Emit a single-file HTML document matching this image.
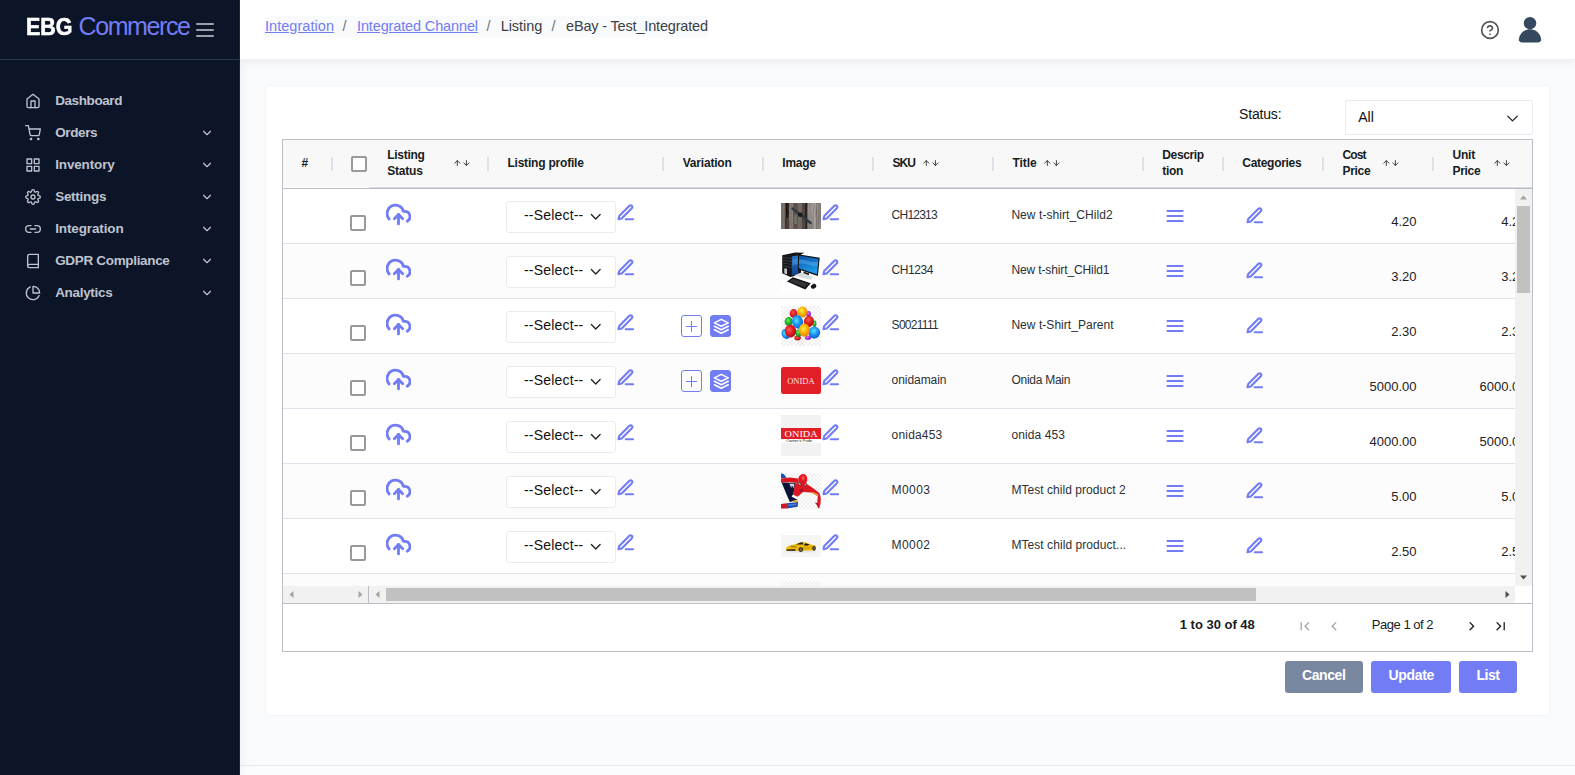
<!DOCTYPE html>
<html lang="en"><head><meta charset="utf-8"><title>EBG Commerce - Listing</title>
<style>
*{box-sizing:border-box;margin:0;padding:0}
html,body{width:1575px;height:775px;overflow:hidden}
body{background:#f9fafb;font-family:"Liberation Sans",sans-serif;color:#000;position:relative;font-size:14px}
.abs{position:absolute}
.t{position:absolute;white-space:pre;line-height:20px;height:20px}
#sidebar{z-index:3;position:absolute;left:0;top:0;width:240px;height:775px;background:#0c1427;border-right:1px solid #1a2540;color:#bfc3ce;box-shadow:0 8px 10px 0 rgba(183,192,206,.2)}
#sb-head{position:absolute;left:0;top:0;width:239px;height:60px;border-bottom:1px solid #2c3850}
#navbar{z-index:4;position:absolute;left:240px;top:0;width:1335px;height:60px;background:#fff;border-bottom:1px solid #eef0f5;box-shadow:0 2px 7px rgba(183,192,206,.22);clip-path:inset(0 0 -20px 0)}
#bcbg{position:absolute;left:25px;top:16px;width:443px;height:21px;background:#f9fafb}
#card{position:absolute;left:265px;top:85px;width:1285px;height:631px;background:#fff;border:1px solid #f2f4f9;border-radius:4px}
#footer{position:absolute;left:240px;top:765px;width:1335px;height:10px;background:#fbfcfd;border-top:1px solid #e8ebf1}
#grid{position:absolute;left:282px;top:139px;width:1251px;height:513px;border:1px solid #babfc7;background:#fff;overflow:hidden}
#ghead{position:absolute;left:0;top:0;width:1249px;height:49px;background:#f8f8f8;border-bottom:1px solid #babfc7}
.sep{position:absolute;top:17px;width:2px;height:14px;background:#dde2eb}
.row{position:absolute;left:0;width:1232px;height:55px;border-bottom:1px solid #dde2eb;background:#fff}
.row.odd{background:#fcfcfc}
.cb{position:absolute;width:16px;height:16px;border:2px solid #999;border-radius:2px;background:#fff}
.sel{position:absolute;left:223px;top:12px;width:110px;height:32px;border:1px solid #e8ebf1;border-radius:3px;background:#fff}
.btn{position:absolute;top:661px;height:32px;border-radius:3px;background:#727cf5}
.vb{position:absolute;width:21px;height:22px;border-radius:3px;border:1px solid #727cf5}
</style></head>
<body>
<svg width="0" height="0" style="position:absolute"><defs><pattern id="chk" width="4" height="4" patternUnits="userSpaceOnUse"><rect width="2" height="2" fill="#f0f0f0"/><rect x="2" y="2" width="2" height="2" fill="#f0f0f0"/></pattern><pattern id="chk2" width="2" height="2" patternUnits="userSpaceOnUse"><rect width="1" height="1" fill="#eeeeee"/><rect x="1" y="1" width="1" height="1" fill="#eeeeee"/></pattern><filter id="wd" x="0" y="0" width="1" height="1"><feTurbulence type="fractalNoise" baseFrequency="0.9 0.06" numOctaves="3" seed="4"/><feColorMatrix type="matrix" values="0 0 0 0 0.14  0 0 0 0 0.11  0 0 0 0 0.1  1.9 0 0 0 -0.6"/></filter><linearGradient id="pcs" x1="0" y1="0" x2=".3" y2="1"><stop offset="0" stop-color="#0a4fa6"/><stop offset="1" stop-color="#1f9be8"/></linearGradient><linearGradient id="pcb" x1="0" y1="0" x2="0" y2="1"><stop offset="0" stop-color="#2379c9"/><stop offset="1" stop-color="#143f88"/></linearGradient><radialGradient id="gR" cx=".42" cy=".38" r=".65"><stop offset="0" stop-color="#ff5a4e"/><stop offset=".55" stop-color="#dc1b20"/><stop offset="1" stop-color="#a20f14"/></radialGradient><radialGradient id="gY" cx=".42" cy=".38" r=".65"><stop offset="0" stop-color="#fff23a"/><stop offset=".55" stop-color="#f9ab0c"/><stop offset="1" stop-color="#e27c06"/></radialGradient><radialGradient id="gB" cx=".42" cy=".38" r=".65"><stop offset="0" stop-color="#4fe9ff"/><stop offset=".55" stop-color="#1b8af0"/><stop offset="1" stop-color="#0d5fd0"/></radialGradient><radialGradient id="gG" cx=".42" cy=".38" r=".65"><stop offset="0" stop-color="#6cf05a"/><stop offset=".55" stop-color="#1faf2c"/><stop offset="1" stop-color="#0e7e1b"/></radialGradient><radialGradient id="gP" cx=".42" cy=".38" r=".65"><stop offset="0" stop-color="#e77bff"/><stop offset=".55" stop-color="#a427dc"/><stop offset="1" stop-color="#7616b0"/></radialGradient></defs></svg>
<div id="sidebar">
<div id="sb-head"></div>
<span class="t" style="left:26.10px;top:17.28px;font-size:24px;font-weight:700;color:#fff;transform-origin:0 50%;transform:scaleX(0.895);-webkit-text-stroke:.6px #fff;">EBG</span>
<span class="t" style="left:78.50px;top:16.04px;font-size:25px;color:#727cf5;letter-spacing:-1.407px;">Commerce</span>
<svg class="abs" style="left:193px;top:18px;" width="24" height="24" viewBox="0 0 24 24" fill="none" stroke="#9b9fa9" stroke-width="2" stroke-linecap="round" stroke-linejoin="round"><line x1="4" y1="12" x2="20" y2="12"/><line x1="4" y1="6" x2="20" y2="6"/><line x1="4" y1="18" x2="20" y2="18"/></svg>
<svg class="abs" style="left:25px;top:92.7px;" width="16" height="16" viewBox="0 0 24 24" fill="none" stroke="#bfc3ce" stroke-width="2" stroke-linecap="round" stroke-linejoin="round"><path d="M3 9l9-7 9 7v11a2 2 0 0 1-2 2H5a2 2 0 0 1-2-2z"/><polyline points="9 22 9 12 15 12 15 22"/></svg>
<span class="t" style="left:55.20px;top:91.02px;font-size:13.5px;font-weight:700;color:#bfc3ce;letter-spacing:-0.414px;">Dashboard</span>
<svg class="abs" style="left:25px;top:124.7px;" width="16" height="16" viewBox="0 0 24 24" fill="none" stroke="#bfc3ce" stroke-width="2" stroke-linecap="round" stroke-linejoin="round"><circle cx="9" cy="21" r="1"/><circle cx="20" cy="21" r="1"/><path d="M1 1h4l2.68 13.39a2 2 0 0 0 2 1.61h9.72a2 2 0 0 0 2-1.61L23 6H6"/></svg>
<span class="t" style="left:55.20px;top:123.02px;font-size:13.5px;font-weight:700;color:#bfc3ce;letter-spacing:-0.378px;">Orders</span>
<svg class="abs" style="left:200px;top:125.5px;" width="14" height="14" viewBox="0 0 24 24" fill="none" stroke="#bfc3ce" stroke-width="2" stroke-linecap="round" stroke-linejoin="round"><polyline points="6 9 12 15 18 9"/></svg>
<svg class="abs" style="left:25px;top:156.7px;" width="16" height="16" viewBox="0 0 24 24" fill="none" stroke="#bfc3ce" stroke-width="2" stroke-linecap="round" stroke-linejoin="round"><rect x="3" y="3" width="7" height="7"/><rect x="14" y="3" width="7" height="7"/><rect x="14" y="14" width="7" height="7"/><rect x="3" y="14" width="7" height="7"/></svg>
<span class="t" style="left:55.20px;top:155.02px;font-size:13.5px;font-weight:700;color:#bfc3ce;letter-spacing:-0.149px;">Inventory</span>
<svg class="abs" style="left:200px;top:157.5px;" width="14" height="14" viewBox="0 0 24 24" fill="none" stroke="#bfc3ce" stroke-width="2" stroke-linecap="round" stroke-linejoin="round"><polyline points="6 9 12 15 18 9"/></svg>
<svg class="abs" style="left:25px;top:188.7px;" width="16" height="16" viewBox="0 0 24 24" fill="none" stroke="#bfc3ce" stroke-width="2" stroke-linecap="round" stroke-linejoin="round"><circle cx="12" cy="12" r="3"/><path d="M19.4 15a1.65 1.65 0 0 0 .33 1.82l.06.06a2 2 0 0 1 0 2.83 2 2 0 0 1-2.83 0l-.06-.06a1.65 1.65 0 0 0-1.82-.33 1.65 1.65 0 0 0-1 1.51V21a2 2 0 0 1-2 2 2 2 0 0 1-2-2v-.09A1.65 1.65 0 0 0 9 19.4a1.65 1.65 0 0 0-1.82.33l-.06.06a2 2 0 0 1-2.83 0 2 2 0 0 1 0-2.83l.06-.06a1.65 1.65 0 0 0 .33-1.82 1.65 1.65 0 0 0-1.51-1H3a2 2 0 0 1-2-2 2 2 0 0 1 2-2h.09A1.65 1.65 0 0 0 4.6 9a1.65 1.65 0 0 0-.33-1.82l-.06-.06a2 2 0 0 1 0-2.83 2 2 0 0 1 2.83 0l.06.06a1.65 1.65 0 0 0 1.82.33H9a1.65 1.65 0 0 0 1-1.51V3a2 2 0 0 1 2-2 2 2 0 0 1 2 2v.09a1.65 1.65 0 0 0 1 1.51 1.65 1.65 0 0 0 1.82-.33l.06-.06a2 2 0 0 1 2.83 0 2 2 0 0 1 0 2.83l-.06.06a1.65 1.65 0 0 0-.33 1.82V9a1.65 1.65 0 0 0 1.51 1H21a2 2 0 0 1 2 2 2 2 0 0 1-2 2h-.09a1.65 1.65 0 0 0-1.51 1z"/></svg>
<span class="t" style="left:55.20px;top:187.02px;font-size:13.5px;font-weight:700;color:#bfc3ce;letter-spacing:-0.289px;">Settings</span>
<svg class="abs" style="left:200px;top:189.5px;" width="14" height="14" viewBox="0 0 24 24" fill="none" stroke="#bfc3ce" stroke-width="2" stroke-linecap="round" stroke-linejoin="round"><polyline points="6 9 12 15 18 9"/></svg>
<svg class="abs" style="left:25px;top:220.7px;" width="16" height="16" viewBox="0 0 24 24" fill="none" stroke="#bfc3ce" stroke-width="2" stroke-linecap="round" stroke-linejoin="round"><path d="M15 7h3a5 5 0 0 1 5 5 5 5 0 0 1-5 5h-3m-6 0H6a5 5 0 0 1-5-5 5 5 0 0 1 5-5h3"/><line x1="8" y1="12" x2="16" y2="12"/></svg>
<span class="t" style="left:55.20px;top:219.02px;font-size:13.5px;font-weight:700;color:#bfc3ce;letter-spacing:-0.119px;">Integration</span>
<svg class="abs" style="left:200px;top:221.5px;" width="14" height="14" viewBox="0 0 24 24" fill="none" stroke="#bfc3ce" stroke-width="2" stroke-linecap="round" stroke-linejoin="round"><polyline points="6 9 12 15 18 9"/></svg>
<svg class="abs" style="left:25px;top:252.7px;" width="16" height="16" viewBox="0 0 24 24" fill="none" stroke="#bfc3ce" stroke-width="2" stroke-linecap="round" stroke-linejoin="round"><path d="M4 19.5A2.5 2.5 0 0 1 6.5 17H20"/><path d="M6.5 2H20v20H6.5A2.5 2.5 0 0 1 4 19.5v-15A2.5 2.5 0 0 1 6.5 2z"/></svg>
<span class="t" style="left:55.20px;top:251.02px;font-size:13.5px;font-weight:700;color:#bfc3ce;letter-spacing:-0.330px;">GDPR Compliance</span>
<svg class="abs" style="left:200px;top:253.5px;" width="14" height="14" viewBox="0 0 24 24" fill="none" stroke="#bfc3ce" stroke-width="2" stroke-linecap="round" stroke-linejoin="round"><polyline points="6 9 12 15 18 9"/></svg>
<svg class="abs" style="left:25px;top:284.7px;" width="16" height="16" viewBox="0 0 24 24" fill="none" stroke="#bfc3ce" stroke-width="2" stroke-linecap="round" stroke-linejoin="round"><path d="M21.21 15.89A10 10 0 1 1 8 2.83"/><path d="M22 12A10 10 0 0 0 12 2v10z"/></svg>
<span class="t" style="left:55.20px;top:283.02px;font-size:13.5px;font-weight:700;color:#bfc3ce;letter-spacing:-0.321px;">Analytics</span>
<svg class="abs" style="left:200px;top:285.5px;" width="14" height="14" viewBox="0 0 24 24" fill="none" stroke="#bfc3ce" stroke-width="2" stroke-linecap="round" stroke-linejoin="round"><polyline points="6 9 12 15 18 9"/></svg></div>
<div id="navbar">
<div id="bcbg"></div></div>
<div class="abs" style="left:0;top:0;width:0;height:0;z-index:5">
<a class="t" style="left:265.00px;top:15.88px;font-size:14.5px;color:#727cf5;letter-spacing:0.045px;text-decoration:underline;">Integration</a>
<span class="t" style="left:342.50px;top:15.88px;font-size:14.5px;color:#6c757d;">/</span>
<a class="t" style="left:357.00px;top:15.88px;font-size:14.5px;color:#727cf5;letter-spacing:-0.134px;text-decoration:underline;">Integrated Channel</a>
<span class="t" style="left:486.50px;top:15.88px;font-size:14.5px;color:#6c757d;">/</span>
<span class="t" style="left:500.70px;top:15.88px;font-size:14.5px;color:#3a3f45;letter-spacing:-0.065px;">Listing</span>
<span class="t" style="left:551.50px;top:15.88px;font-size:14.5px;color:#6c757d;">/</span>
<span class="t" style="left:566.00px;top:15.88px;font-size:14.5px;color:#3a3f45;letter-spacing:-0.169px;">eBay - Test_Integrated</span>
<svg class="abs" style="left:1479.8px;top:19.6px;" width="20" height="20" viewBox="0 0 24 24" fill="none" stroke="#555" stroke-width="2" stroke-linecap="round" stroke-linejoin="round"><circle cx="12" cy="12" r="10"/><path d="M9.09 9a3 3 0 0 1 5.83 1c0 2-3 3-3 3"/><line x1="12" y1="17" x2="12.01" y2="17"/></svg>
<svg class="abs" style="left:1517px;top:15px" width="26" height="29" viewBox="0 0 26 29"><circle cx="13" cy="8.2" r="6.2" fill="#34495e"/><path d="M1.8 25.5C1.8 19 7 14.2 13 14.2S24.2 19 24.2 25.5Q23 27.6 21 27.6H5Q3 27.6 1.8 25.5Z" fill="#34495e"/></svg></div>
<div id="card"></div>
<span class="t" style="left:1239.00px;top:104.25px;font-size:14px;color:#111;letter-spacing:-0.168px;">Status:</span>
<div class="abs" style="left:1345px;top:100px;width:188px;height:35px;border:1px solid #e8ebf1;border-radius:2px;background:#fff"></div>
<span class="t" style="left:1358.20px;top:106.85px;font-size:14px;color:#111;letter-spacing:0.095px;">All</span>
<svg class="abs" style="left:1502.5px;top:108.5px;" width="19" height="19" viewBox="0 0 24 24" fill="none" stroke="#222" stroke-width="1.7" stroke-linecap="round" stroke-linejoin="round"><polyline points="6 9 12 15 18 9"/></svg>
<div class="btn" style="left:1285px;width:78px;background:#7987a1"></div>
<span class="t" style="left:1302.00px;top:665.25px;font-size:14px;font-weight:700;color:#fff;letter-spacing:-0.422px;">Cancel</span>
<div class="btn" style="left:1371px;width:80px;background:#727cf5"></div>
<span class="t" style="left:1388.50px;top:665.25px;font-size:14px;font-weight:700;color:#fff;letter-spacing:-0.337px;">Update</span>
<div class="btn" style="left:1459px;width:58px;background:#727cf5"></div>
<span class="t" style="left:1476.50px;top:665.25px;font-size:14px;font-weight:700;color:#fff;letter-spacing:-0.454px;">List</span>
<div id="grid">
<div id="ghead"></div>
<div class="abs" style="left:86px;top:47px;width:1163px;height:1px;background:#d6d7da"></div>
<div class="abs" style="left:86px;top:46px;width:1163px;height:1px;background:#fcfcfc"></div>
<div class="abs" style="left:0;top:47px;width:86px;height:1px;background:#fdfdfd"></div>
<span class="t" style="left:18.50px;top:13.24px;font-size:12px;font-weight:700;color:#181d1f;">#</span>
<div class="cb" style="left:68px;top:16px"></div>
<div class="sep" style="left:48px"></div>
<div class="sep" style="left:204px"></div>
<div class="sep" style="left:379px"></div>
<div class="sep" style="left:479px"></div>
<div class="sep" style="left:589px"></div>
<div class="sep" style="left:709px"></div>
<div class="sep" style="left:859px"></div>
<div class="sep" style="left:939px"></div>
<div class="sep" style="left:1039px"></div>
<div class="sep" style="left:1149px"></div>
<span class="t" style="left:104.30px;top:5.34px;font-size:12px;font-weight:700;color:#181d1f;letter-spacing:-0.312px;">Listing</span>
<span class="t" style="left:104.30px;top:21.34px;font-size:12px;font-weight:700;color:#181d1f;letter-spacing:-0.216px;">Status</span>
<span class="t" style="left:224.40px;top:13.24px;font-size:12px;font-weight:700;color:#181d1f;letter-spacing:-0.203px;">Listing profile</span>
<span class="t" style="left:399.70px;top:13.24px;font-size:12px;font-weight:700;color:#181d1f;letter-spacing:-0.199px;">Variation</span>
<span class="t" style="left:499.30px;top:13.24px;font-size:12px;font-weight:700;color:#181d1f;letter-spacing:-0.242px;">Image</span>
<span class="t" style="left:609.50px;top:13.24px;font-size:12px;font-weight:700;color:#181d1f;letter-spacing:-0.978px;">SKU</span>
<span class="t" style="left:729.50px;top:13.24px;font-size:12px;font-weight:700;color:#181d1f;letter-spacing:-0.078px;">Title</span>
<span class="t" style="left:879.30px;top:5.34px;font-size:12px;font-weight:700;color:#181d1f;letter-spacing:-0.359px;">Descrip</span>
<span class="t" style="left:879.30px;top:21.34px;font-size:12px;font-weight:700;color:#181d1f;letter-spacing:-0.314px;">tion</span>
<span class="t" style="left:959.30px;top:13.24px;font-size:12px;font-weight:700;color:#181d1f;letter-spacing:-0.298px;">Categories</span>
<span class="t" style="left:1059.40px;top:5.34px;font-size:12px;font-weight:700;color:#181d1f;letter-spacing:-0.878px;">Cost</span>
<span class="t" style="left:1059.40px;top:21.34px;font-size:12px;font-weight:700;color:#181d1f;letter-spacing:-0.258px;">Price</span>
<span class="t" style="left:1169.40px;top:5.34px;font-size:12px;font-weight:700;color:#181d1f;letter-spacing:-0.151px;">Unit</span>
<span class="t" style="left:1169.40px;top:21.34px;font-size:12px;font-weight:700;color:#181d1f;letter-spacing:-0.258px;">Price</span>
<svg class="abs" style="left:170.10000000000002px;top:18px" width="18" height="10" viewBox="0 0 18 10" fill="none" stroke="#33383d" stroke-width="0.95" stroke-linecap="round" stroke-linejoin="round"><path d="M4.3 7.500V2.700M1.700 5.200L4.300 2.600 6.900 5.200"/><path d="M13.400 2.600V7.400M10.800 4.900L13.400 7.500 16 4.900"/></svg>
<svg class="abs" style="left:639.2px;top:18px" width="18" height="10" viewBox="0 0 18 10" fill="none" stroke="#33383d" stroke-width="0.95" stroke-linecap="round" stroke-linejoin="round"><path d="M4.3 7.500V2.700M1.700 5.200L4.300 2.600 6.900 5.200"/><path d="M13.400 2.600V7.400M10.800 4.900L13.400 7.500 16 4.900"/></svg>
<svg class="abs" style="left:760.3px;top:18px" width="18" height="10" viewBox="0 0 18 10" fill="none" stroke="#33383d" stroke-width="0.95" stroke-linecap="round" stroke-linejoin="round"><path d="M4.3 7.500V2.700M1.700 5.200L4.300 2.600 6.900 5.200"/><path d="M13.400 2.600V7.400M10.800 4.900L13.400 7.500 16 4.900"/></svg>
<svg class="abs" style="left:1099.3px;top:18px" width="18" height="10" viewBox="0 0 18 10" fill="none" stroke="#33383d" stroke-width="0.95" stroke-linecap="round" stroke-linejoin="round"><path d="M4.3 7.500V2.700M1.700 5.200L4.300 2.600 6.900 5.200"/><path d="M13.400 2.600V7.400M10.800 4.900L13.400 7.500 16 4.900"/></svg>
<svg class="abs" style="left:1209.5px;top:18px" width="18" height="10" viewBox="0 0 18 10" fill="none" stroke="#33383d" stroke-width="0.95" stroke-linecap="round" stroke-linejoin="round"><path d="M4.3 7.500V2.700M1.700 5.200L4.300 2.600 6.900 5.200"/><path d="M13.400 2.600V7.400M10.800 4.900L13.400 7.500 16 4.900"/></svg>
<div class="abs" style="left:0;top:49px;width:1232px;height:397px;overflow:hidden">
<div class="row" style="top:0px">
<div class="cb" style="left:67px;top:26px"></div>
<svg class="abs" style="left:102.6px;top:13.2px;" width="25" height="25" viewBox="0 0 24 24" fill="none" stroke="#727cf5" stroke-width="2.7" stroke-linecap="round" stroke-linejoin="round"><polyline points="16 16 12 12 8 16"/><line x1="12" y1="12" x2="12" y2="21"/><path d="M20.39 18.39A5 5 0 0 0 18 9h-1.26A8 8 0 1 0 3 16.3"/></svg>
<div class="sel"></div>
<span class="t" style="left:241.00px;top:16.15px;font-size:14px;color:#111;letter-spacing:0.183px;">--Select--</span>
<svg class="abs" style="left:303.5px;top:18.8px;" width="17.5" height="17.5" viewBox="0 0 24 24" fill="none" stroke="#222" stroke-width="1.8" stroke-linecap="round" stroke-linejoin="round"><polyline points="6 9 12 15 18 9"/></svg>
<svg class="abs" style="left:333.3px;top:13.6px;" width="19.5" height="19.5" viewBox="0 0 24 24" fill="none" stroke="#727cf5" stroke-width="2.6" stroke-linecap="round" stroke-linejoin="round"><path d="M12 20h9"/><path d="M16.5 3.5a2.121 2.121 0 0 1 3 3L7 19l-4 1 1-4L16.5 3.5z"/></svg>
<svg class="abs" style="left:498px;top:14px" width="40" height="26" viewBox="0 0 40 26"><rect width="40" height="26" fill="#6f665f"/>
<rect x="0" y="0" width="4.500" height="26" fill="#7d746d"/><rect x="4.500" y="0" width="3.600" height="26" fill="#120d0b"/>
<rect x="8.100" y="0" width="4" height="26" fill="#8a817a"/><rect x="12" y="0" width="5" height="26" fill="#5b504a"/><rect x="17" y="0" width="4" height="26" fill="#776b63"/><rect x="21" y="0" width="3.200" height="26" fill="#4a3f3a"/>
<rect x="24.200" y="0" width="2.300" height="26" fill="#191311"/><rect x="26.500" y="0" width="5" height="26" fill="#9a9593"/><rect x="31.500" y="0" width="4" height="26" fill="#b3b0af"/><rect x="35.500" y="0" width="4.500" height="26" fill="#8e8986"/>
<rect x="4.500" y="15" width="3.600" height="11" fill="#3a2f29"/><rect x="13" y="12" width="3" height="9" fill="#8c9a86" opacity=".45"/>
<rect width="40" height="26" filter="url(#wd)" opacity=".7"/>
<path d="M11.500 5.500L29.500 20" stroke="#2f3c40" stroke-width="2.500" stroke-linecap="round"/><circle cx="19.300" cy="11.800" r="2.300" fill="#14191b"/></svg>
<svg class="abs" style="left:537.8px;top:13.6px;" width="19.5" height="19.5" viewBox="0 0 24 24" fill="none" stroke="#727cf5" stroke-width="2.6" stroke-linecap="round" stroke-linejoin="round"><path d="M12 20h9"/><path d="M16.5 3.5a2.121 2.121 0 0 1 3 3L7 19l-4 1 1-4L16.5 3.5z"/></svg>
<span class="t" style="left:608.60px;top:15.74px;font-size:12px;color:#2b3035;letter-spacing:-0.770px;">CH12313</span>
<span class="t" style="left:728.40px;top:15.74px;font-size:12px;color:#2b3035;letter-spacing:0.067px;">New t-shirt_CHild2</span>
<svg class="abs" style="left:881.8px;top:16.5px;" width="20" height="20" viewBox="0 0 24 24" fill="none" stroke="#727cf5" stroke-width="2.6" stroke-linecap="round" stroke-linejoin="round"><line x1="3" y1="12" x2="21" y2="12"/><line x1="3" y1="6" x2="21" y2="6"/><line x1="3" y1="18" x2="21" y2="18"/></svg>
<svg class="abs" style="left:961.6px;top:16.6px;" width="19.5" height="19.5" viewBox="0 0 24 24" fill="none" stroke="#727cf5" stroke-width="2.6" stroke-linecap="round" stroke-linejoin="round"><path d="M12 20h9"/><path d="M16.5 3.5a2.121 2.121 0 0 1 3 3L7 19l-4 1 1-4L16.5 3.5z"/></svg>
<span class="t" style="left:1108.19px;top:22.60px;font-size:13px;color:#222;">4.20</span>
<span class="t" style="left:1218.19px;top:22.60px;font-size:13px;color:#222;">4.20</span></div>
<div class="row odd" style="top:55px">
<div class="cb" style="left:67px;top:26px"></div>
<svg class="abs" style="left:102.6px;top:13.2px;" width="25" height="25" viewBox="0 0 24 24" fill="none" stroke="#727cf5" stroke-width="2.7" stroke-linecap="round" stroke-linejoin="round"><polyline points="16 16 12 12 8 16"/><line x1="12" y1="12" x2="12" y2="21"/><path d="M20.39 18.39A5 5 0 0 0 18 9h-1.26A8 8 0 1 0 3 16.3"/></svg>
<div class="sel"></div>
<span class="t" style="left:241.00px;top:16.15px;font-size:14px;color:#111;letter-spacing:0.183px;">--Select--</span>
<svg class="abs" style="left:303.5px;top:18.8px;" width="17.5" height="17.5" viewBox="0 0 24 24" fill="none" stroke="#222" stroke-width="1.8" stroke-linecap="round" stroke-linejoin="round"><polyline points="6 9 12 15 18 9"/></svg>
<svg class="abs" style="left:333.3px;top:13.6px;" width="19.5" height="19.5" viewBox="0 0 24 24" fill="none" stroke="#727cf5" stroke-width="2.6" stroke-linecap="round" stroke-linejoin="round"><path d="M12 20h9"/><path d="M16.5 3.5a2.121 2.121 0 0 1 3 3L7 19l-4 1 1-4L16.5 3.5z"/></svg>
<svg class="abs" style="left:498px;top:7px" width="40" height="40" viewBox="0 0 40 40"><rect width="40" height="40" fill="#fff"/>
<path d="M1.200 4.200L14 1.400 23.500 1.800 20 3.600 20 23.400 9.200 26 1.200 22.200Z" fill="#151618"/>
<path d="M10.800 5.400L17.300 4.200 17.300 22.600 10.800 24.400Z" fill="url(#pcb)"/><path d="M11.500 9C13.500 7.500 15.500 8.500 17.300 7.200V13C15.500 14 13.500 13 11.500 14.500Z" fill="#6cc0f5" opacity=".35"/>
<path d="M2 6.600L10.600 7.400M2 9.400L10.600 10.400M2 12.200L10.600 13.400M2 15L10.600 16.400" stroke="#44474c" stroke-width=".8"/>
<path d="M3.300 17.300L6 17.800 6 23.300 3.300 22.400Z" fill="#c3c7cb"/>
<path d="M17 3.200L38.700 6.800 36.900 25.100 16.800 18.300Z" fill="#0e0f11"/><path d="M18 4.600L37.500 7.800 36 23.300 17.800 17.200Z" fill="url(#pcs)"/>
<path d="M18 9C24 7 30 13 37 10.500L36.600 15C30 16.500 25 11 17.900 13Z" fill="#5cb6f2" opacity=".45"/>
<path d="M22.500 20.400L28 22.200 27.800 26.600 22.300 25.200Z" fill="#1d1e21"/><path d="M13 24.200L20.500 21.500 31.500 25.500 30 28.800 21 27Z" fill="#d9dcdf"/>
<path d="M5.900 30.600L11.900 26.300 29.800 32.300 24.300 38.400Z" fill="#131416"/><path d="M8.300 30.400L12.100 27.700 27.200 32.700 23.900 36.300Z" fill="#303236"/>
<ellipse cx="32.600" cy="35.300" rx="2.800" ry="2.200" fill="#141517" transform="rotate(-30 32.600 35.300)"/><path d="M31 31.500Q33 32.500 32.800 33.500" stroke="#777" stroke-width=".4" fill="none"/></svg>
<svg class="abs" style="left:537.8px;top:13.6px;" width="19.5" height="19.5" viewBox="0 0 24 24" fill="none" stroke="#727cf5" stroke-width="2.6" stroke-linecap="round" stroke-linejoin="round"><path d="M12 20h9"/><path d="M16.5 3.5a2.121 2.121 0 0 1 3 3L7 19l-4 1 1-4L16.5 3.5z"/></svg>
<span class="t" style="left:608.60px;top:15.74px;font-size:12px;color:#2b3035;letter-spacing:-0.460px;">CH1234</span>
<span class="t" style="left:728.40px;top:15.74px;font-size:12px;color:#2b3035;letter-spacing:-0.116px;">New t-shirt_CHild1</span>
<svg class="abs" style="left:881.8px;top:16.5px;" width="20" height="20" viewBox="0 0 24 24" fill="none" stroke="#727cf5" stroke-width="2.6" stroke-linecap="round" stroke-linejoin="round"><line x1="3" y1="12" x2="21" y2="12"/><line x1="3" y1="6" x2="21" y2="6"/><line x1="3" y1="18" x2="21" y2="18"/></svg>
<svg class="abs" style="left:961.6px;top:16.6px;" width="19.5" height="19.5" viewBox="0 0 24 24" fill="none" stroke="#727cf5" stroke-width="2.6" stroke-linecap="round" stroke-linejoin="round"><path d="M12 20h9"/><path d="M16.5 3.5a2.121 2.121 0 0 1 3 3L7 19l-4 1 1-4L16.5 3.5z"/></svg>
<span class="t" style="left:1108.19px;top:22.60px;font-size:13px;color:#222;">3.20</span>
<span class="t" style="left:1218.19px;top:22.60px;font-size:13px;color:#222;">3.20</span></div>
<div class="row" style="top:110px">
<div class="cb" style="left:67px;top:26px"></div>
<svg class="abs" style="left:102.6px;top:13.2px;" width="25" height="25" viewBox="0 0 24 24" fill="none" stroke="#727cf5" stroke-width="2.7" stroke-linecap="round" stroke-linejoin="round"><polyline points="16 16 12 12 8 16"/><line x1="12" y1="12" x2="12" y2="21"/><path d="M20.39 18.39A5 5 0 0 0 18 9h-1.26A8 8 0 1 0 3 16.3"/></svg>
<div class="sel"></div>
<span class="t" style="left:241.00px;top:16.15px;font-size:14px;color:#111;letter-spacing:0.183px;">--Select--</span>
<svg class="abs" style="left:303.5px;top:18.8px;" width="17.5" height="17.5" viewBox="0 0 24 24" fill="none" stroke="#222" stroke-width="1.8" stroke-linecap="round" stroke-linejoin="round"><polyline points="6 9 12 15 18 9"/></svg>
<svg class="abs" style="left:333.3px;top:13.6px;" width="19.5" height="19.5" viewBox="0 0 24 24" fill="none" stroke="#727cf5" stroke-width="2.6" stroke-linecap="round" stroke-linejoin="round"><path d="M12 20h9"/><path d="M16.5 3.5a2.121 2.121 0 0 1 3 3L7 19l-4 1 1-4L16.5 3.5z"/></svg>
<div class="vb" style="left:398px;top:16px"></div>
<div class="abs" style="left:403px;top:26.5px;width:11px;height:1px;background:#727cf5"></div>
<div class="abs" style="left:408px;top:21.5px;width:1px;height:11px;background:#727cf5"></div>
<div class="vb" style="left:427px;top:16px;background:#727cf5"></div>
<svg class="abs" style="left:429.8px;top:18.7px;" width="16.6" height="16.6" viewBox="0 0 24 24" fill="none" stroke="#fff" stroke-width="2.2" stroke-linecap="round" stroke-linejoin="round"><polygon points="12 2 2 7 12 12 22 7 12 2"/><polyline points="2 17 12 22 22 17"/><polyline points="2 12 12 17 22 12"/></svg>
<svg class="abs" style="left:498px;top:7px" width="40" height="40" viewBox="0 0 40 40"><rect width="40" height="100" fill="#fdfdfd"/><rect width="40" height="100" fill="url(#chk)"/><path d="M19 32L17 39.500M24 32L21 39.500M21 33L19.500 39.500" stroke="#ecd9b4" stroke-width=".5"/><ellipse cx="27.6" cy="7.9" rx="2.3" ry="3" fill="url(#gP)"/><ellipse cx="33.6" cy="17.7" rx="1.8" ry="3.2" fill="url(#gG)"/><ellipse cx="4.9" cy="28" rx="4.2" ry="5.2" fill="url(#gB)" transform="rotate(-25 4.9 28)"/><ellipse cx="27" cy="31.7" rx="3" ry="2" fill="url(#gP)"/><ellipse cx="16.6" cy="32" rx="3.3" ry="2.4" fill="url(#gR)"/><ellipse cx="12.6" cy="7.5" rx="3.9" ry="4.4" fill="url(#gR)"/><ellipse cx="7.7" cy="15.6" rx="4.1" ry="4.5" fill="url(#gG)"/><ellipse cx="21.4" cy="5.9" rx="5" ry="5.5" fill="url(#gY)"/><ellipse cx="27.9" cy="15.4" rx="5" ry="5.7" fill="url(#gR)" transform="rotate(15 27.9 15.4)"/><ellipse cx="17.5" cy="27.2" rx="2.8" ry="3.8" fill="url(#gG)"/><ellipse cx="33.2" cy="26.6" rx="5.9" ry="6" fill="url(#gB)" transform="rotate(20 33.2 26.6)"/><ellipse cx="16.6" cy="15.9" rx="5.5" ry="6.9" fill="url(#gB)" transform="rotate(-15 16.6 15.9)"/><ellipse cx="9.5" cy="25.1" rx="5.7" ry="6.3" fill="url(#gR)" transform="rotate(-15 9.5 25.1)"/><ellipse cx="23.4" cy="24.2" rx="5.6" ry="6.6" fill="url(#gY)"/></svg>
<svg class="abs" style="left:537.8px;top:13.6px;" width="19.5" height="19.5" viewBox="0 0 24 24" fill="none" stroke="#727cf5" stroke-width="2.6" stroke-linecap="round" stroke-linejoin="round"><path d="M12 20h9"/><path d="M16.5 3.5a2.121 2.121 0 0 1 3 3L7 19l-4 1 1-4L16.5 3.5z"/></svg>
<span class="t" style="left:608.60px;top:15.74px;font-size:12px;color:#2b3035;letter-spacing:-0.715px;">S0021111</span>
<span class="t" style="left:728.40px;top:15.74px;font-size:12px;color:#2b3035;letter-spacing:0.047px;">New t-Shirt_Parent</span>
<svg class="abs" style="left:881.8px;top:16.5px;" width="20" height="20" viewBox="0 0 24 24" fill="none" stroke="#727cf5" stroke-width="2.6" stroke-linecap="round" stroke-linejoin="round"><line x1="3" y1="12" x2="21" y2="12"/><line x1="3" y1="6" x2="21" y2="6"/><line x1="3" y1="18" x2="21" y2="18"/></svg>
<svg class="abs" style="left:961.6px;top:16.6px;" width="19.5" height="19.5" viewBox="0 0 24 24" fill="none" stroke="#727cf5" stroke-width="2.6" stroke-linecap="round" stroke-linejoin="round"><path d="M12 20h9"/><path d="M16.5 3.5a2.121 2.121 0 0 1 3 3L7 19l-4 1 1-4L16.5 3.5z"/></svg>
<span class="t" style="left:1108.19px;top:22.60px;font-size:13px;color:#222;">2.30</span>
<span class="t" style="left:1218.19px;top:22.60px;font-size:13px;color:#222;">2.30</span></div>
<div class="row odd" style="top:165px">
<div class="cb" style="left:67px;top:26px"></div>
<svg class="abs" style="left:102.6px;top:13.2px;" width="25" height="25" viewBox="0 0 24 24" fill="none" stroke="#727cf5" stroke-width="2.7" stroke-linecap="round" stroke-linejoin="round"><polyline points="16 16 12 12 8 16"/><line x1="12" y1="12" x2="12" y2="21"/><path d="M20.39 18.39A5 5 0 0 0 18 9h-1.26A8 8 0 1 0 3 16.3"/></svg>
<div class="sel"></div>
<span class="t" style="left:241.00px;top:16.15px;font-size:14px;color:#111;letter-spacing:0.183px;">--Select--</span>
<svg class="abs" style="left:303.5px;top:18.8px;" width="17.5" height="17.5" viewBox="0 0 24 24" fill="none" stroke="#222" stroke-width="1.8" stroke-linecap="round" stroke-linejoin="round"><polyline points="6 9 12 15 18 9"/></svg>
<svg class="abs" style="left:333.3px;top:13.6px;" width="19.5" height="19.5" viewBox="0 0 24 24" fill="none" stroke="#727cf5" stroke-width="2.6" stroke-linecap="round" stroke-linejoin="round"><path d="M12 20h9"/><path d="M16.5 3.5a2.121 2.121 0 0 1 3 3L7 19l-4 1 1-4L16.5 3.5z"/></svg>
<div class="vb" style="left:398px;top:16px"></div>
<div class="abs" style="left:403px;top:26.5px;width:11px;height:1px;background:#727cf5"></div>
<div class="abs" style="left:408px;top:21.5px;width:1px;height:11px;background:#727cf5"></div>
<div class="vb" style="left:427px;top:16px;background:#727cf5"></div>
<svg class="abs" style="left:429.8px;top:18.7px;" width="16.6" height="16.6" viewBox="0 0 24 24" fill="none" stroke="#fff" stroke-width="2.2" stroke-linecap="round" stroke-linejoin="round"><polygon points="12 2 2 7 12 12 22 7 12 2"/><polyline points="2 17 12 22 22 17"/><polyline points="2 12 12 17 22 12"/></svg>
<svg class="abs" style="left:498px;top:13px" width="40" height="27" viewBox="0 0 40 27"><rect width="40" height="27" rx="2.500" fill="#e21e26"/><text x="6.200" y="17.200" font-family="Liberation Serif,serif" font-size="8.800" fill="#fff" fill-opacity=".92" textLength="27.400" lengthAdjust="spacingAndGlyphs">ONIDA</text></svg>
<svg class="abs" style="left:537.8px;top:13.6px;" width="19.5" height="19.5" viewBox="0 0 24 24" fill="none" stroke="#727cf5" stroke-width="2.6" stroke-linecap="round" stroke-linejoin="round"><path d="M12 20h9"/><path d="M16.5 3.5a2.121 2.121 0 0 1 3 3L7 19l-4 1 1-4L16.5 3.5z"/></svg>
<span class="t" style="left:608.60px;top:15.74px;font-size:12px;color:#2b3035;letter-spacing:-0.056px;">onidamain</span>
<span class="t" style="left:728.40px;top:15.74px;font-size:12px;color:#2b3035;letter-spacing:-0.261px;">Onida Main</span>
<svg class="abs" style="left:881.8px;top:16.5px;" width="20" height="20" viewBox="0 0 24 24" fill="none" stroke="#727cf5" stroke-width="2.6" stroke-linecap="round" stroke-linejoin="round"><line x1="3" y1="12" x2="21" y2="12"/><line x1="3" y1="6" x2="21" y2="6"/><line x1="3" y1="18" x2="21" y2="18"/></svg>
<svg class="abs" style="left:961.6px;top:16.6px;" width="19.5" height="19.5" viewBox="0 0 24 24" fill="none" stroke="#727cf5" stroke-width="2.6" stroke-linecap="round" stroke-linejoin="round"><path d="M12 20h9"/><path d="M16.5 3.5a2.121 2.121 0 0 1 3 3L7 19l-4 1 1-4L16.5 3.5z"/></svg>
<span class="t" style="left:1086.50px;top:22.60px;font-size:13px;color:#222;">5000.00</span>
<span class="t" style="left:1196.50px;top:22.60px;font-size:13px;color:#222;">6000.00</span></div>
<div class="row" style="top:220px">
<div class="cb" style="left:67px;top:26px"></div>
<svg class="abs" style="left:102.6px;top:13.2px;" width="25" height="25" viewBox="0 0 24 24" fill="none" stroke="#727cf5" stroke-width="2.7" stroke-linecap="round" stroke-linejoin="round"><polyline points="16 16 12 12 8 16"/><line x1="12" y1="12" x2="12" y2="21"/><path d="M20.39 18.39A5 5 0 0 0 18 9h-1.26A8 8 0 1 0 3 16.3"/></svg>
<div class="sel"></div>
<span class="t" style="left:241.00px;top:16.15px;font-size:14px;color:#111;letter-spacing:0.183px;">--Select--</span>
<svg class="abs" style="left:303.5px;top:18.8px;" width="17.5" height="17.5" viewBox="0 0 24 24" fill="none" stroke="#222" stroke-width="1.8" stroke-linecap="round" stroke-linejoin="round"><polyline points="6 9 12 15 18 9"/></svg>
<svg class="abs" style="left:333.3px;top:13.6px;" width="19.5" height="19.5" viewBox="0 0 24 24" fill="none" stroke="#727cf5" stroke-width="2.6" stroke-linecap="round" stroke-linejoin="round"><path d="M12 20h9"/><path d="M16.5 3.5a2.121 2.121 0 0 1 3 3L7 19l-4 1 1-4L16.5 3.5z"/></svg>
<svg class="abs" style="left:498px;top:6px" width="40" height="41" viewBox="0 0 40 41"><rect width="40" height="41" fill="#f6f6f6"/><rect width="40" height="41" fill="url(#chk2)"/><rect x="0" y="13" width="40" height="11" fill="#e21e26"/><rect x="0" y="24" width="40" height="4" fill="#fff"/><text x="3.600" y="22" font-family="Liberation Serif,serif" font-size="8.800" fill="#fff" textLength="33" lengthAdjust="spacingAndGlyphs">ONIDA</text><text x="5.200" y="27.300" font-family="Liberation Sans,sans-serif" font-size="3.400" fill="#222" textLength="26" lengthAdjust="spacingAndGlyphs">Owner's Pride</text></svg>
<svg class="abs" style="left:537.8px;top:13.6px;" width="19.5" height="19.5" viewBox="0 0 24 24" fill="none" stroke="#727cf5" stroke-width="2.6" stroke-linecap="round" stroke-linejoin="round"><path d="M12 20h9"/><path d="M16.5 3.5a2.121 2.121 0 0 1 3 3L7 19l-4 1 1-4L16.5 3.5z"/></svg>
<span class="t" style="left:608.60px;top:15.74px;font-size:12px;color:#2b3035;letter-spacing:0.175px;">onida453</span>
<span class="t" style="left:728.40px;top:15.74px;font-size:12px;color:#2b3035;letter-spacing:0.092px;">onida 453</span>
<svg class="abs" style="left:881.8px;top:16.5px;" width="20" height="20" viewBox="0 0 24 24" fill="none" stroke="#727cf5" stroke-width="2.6" stroke-linecap="round" stroke-linejoin="round"><line x1="3" y1="12" x2="21" y2="12"/><line x1="3" y1="6" x2="21" y2="6"/><line x1="3" y1="18" x2="21" y2="18"/></svg>
<svg class="abs" style="left:961.6px;top:16.6px;" width="19.5" height="19.5" viewBox="0 0 24 24" fill="none" stroke="#727cf5" stroke-width="2.6" stroke-linecap="round" stroke-linejoin="round"><path d="M12 20h9"/><path d="M16.5 3.5a2.121 2.121 0 0 1 3 3L7 19l-4 1 1-4L16.5 3.5z"/></svg>
<span class="t" style="left:1086.50px;top:22.60px;font-size:13px;color:#222;">4000.00</span>
<span class="t" style="left:1196.50px;top:22.60px;font-size:13px;color:#222;">5000.00</span></div>
<div class="row odd" style="top:275px">
<div class="cb" style="left:67px;top:26px"></div>
<svg class="abs" style="left:102.6px;top:13.2px;" width="25" height="25" viewBox="0 0 24 24" fill="none" stroke="#727cf5" stroke-width="2.7" stroke-linecap="round" stroke-linejoin="round"><polyline points="16 16 12 12 8 16"/><line x1="12" y1="12" x2="12" y2="21"/><path d="M20.39 18.39A5 5 0 0 0 18 9h-1.26A8 8 0 1 0 3 16.3"/></svg>
<div class="sel"></div>
<span class="t" style="left:241.00px;top:16.15px;font-size:14px;color:#111;letter-spacing:0.183px;">--Select--</span>
<svg class="abs" style="left:303.5px;top:18.8px;" width="17.5" height="17.5" viewBox="0 0 24 24" fill="none" stroke="#222" stroke-width="1.8" stroke-linecap="round" stroke-linejoin="round"><polyline points="6 9 12 15 18 9"/></svg>
<svg class="abs" style="left:333.3px;top:13.6px;" width="19.5" height="19.5" viewBox="0 0 24 24" fill="none" stroke="#727cf5" stroke-width="2.6" stroke-linecap="round" stroke-linejoin="round"><path d="M12 20h9"/><path d="M16.5 3.5a2.121 2.121 0 0 1 3 3L7 19l-4 1 1-4L16.5 3.5z"/></svg>
<svg class="abs" style="left:498px;top:9px" width="40" height="36" viewBox="0 0 40 36"><rect width="40" height="100" fill="#fdfdfd"/><rect width="40" height="100" fill="url(#chk)"/><path d="M0 0.300L3 1.200 5.600 4.700 0 5.300Z" fill="#1c50b8"/>
<path d="M0 5.600L9 4.500 17 5.600 17 10 9 9.200 0 9.500Z" fill="#d8151f"/>
<path d="M0.600 9.500L14.200 10.100 13 19 10.700 23.700 16.600 26.700 8.900 29 6.500 23.700Z" fill="#0b1233"/>
<path d="M8.400 10.800L10.200 15 11 12 12.300 15.600 13.400 10.800Z" fill="#d5e0f7"/>
<path d="M14.200 10.100L25.500 10.700 32.600 15.400 38.600 20.200 39.800 24.900 39.500 30.900 38 35 36.200 30.300 36.800 23.100 30.300 19.600 22 19 16.600 23.700 11.900 21.400Z" fill="#dc1822"/>
<path d="M33.800 29.400L36.500 30 38.600 35 37.200 35.200 36 32.200Z" fill="#b5121a"/><path d="M31.500 18.800L37.500 21.600 37.200 23 31 20.200Z" fill="#e6a23a"/>
<ellipse cx="21.700" cy="6.500" rx="4.500" ry="5.600" fill="#e5141f" transform="rotate(12 21.700 6.500)"/><ellipse cx="22.200" cy="5" rx="1.800" ry="2.600" fill="#f2585c" opacity=".7"/>
<path d="M17.300 9.200L20.500 11.600 18.200 12.300Z" fill="#fff" stroke="#111" stroke-width=".5"/><path d="M25.400 10.200L22.600 12.600 24.800 13Z" fill="#fff" stroke="#111" stroke-width=".5"/>
<path d="M18 17.500L22 15.500 21 19Z" fill="#5a1a3a" opacity=".7"/>
<path d="M0 30.900L5.900 30.300 5.900 35.600 0 35.600Z" fill="#d3141d"/><path d="M5.900 30.300L17.200 29.100 16.600 33.800 5.900 35.600Z" fill="#1d4db0"/><path d="M7 31.500L15.500 30.500 15.300 32 7 33Z" fill="#5a8fe0" opacity=".8"/><path d="M11.900 27.600L16.600 27.200 17 29 12 29.600Z" fill="#e8a21c"/></svg>
<svg class="abs" style="left:537.8px;top:13.6px;" width="19.5" height="19.5" viewBox="0 0 24 24" fill="none" stroke="#727cf5" stroke-width="2.6" stroke-linecap="round" stroke-linejoin="round"><path d="M12 20h9"/><path d="M16.5 3.5a2.121 2.121 0 0 1 3 3L7 19l-4 1 1-4L16.5 3.5z"/></svg>
<span class="t" style="left:608.60px;top:15.74px;font-size:12px;color:#2b3035;letter-spacing:0.422px;">M0003</span>
<span class="t" style="left:728.40px;top:15.74px;font-size:12px;color:#2b3035;letter-spacing:0.044px;">MTest child product 2</span>
<svg class="abs" style="left:881.8px;top:16.5px;" width="20" height="20" viewBox="0 0 24 24" fill="none" stroke="#727cf5" stroke-width="2.6" stroke-linecap="round" stroke-linejoin="round"><line x1="3" y1="12" x2="21" y2="12"/><line x1="3" y1="6" x2="21" y2="6"/><line x1="3" y1="18" x2="21" y2="18"/></svg>
<svg class="abs" style="left:961.6px;top:16.6px;" width="19.5" height="19.5" viewBox="0 0 24 24" fill="none" stroke="#727cf5" stroke-width="2.6" stroke-linecap="round" stroke-linejoin="round"><path d="M12 20h9"/><path d="M16.5 3.5a2.121 2.121 0 0 1 3 3L7 19l-4 1 1-4L16.5 3.5z"/></svg>
<span class="t" style="left:1108.19px;top:22.60px;font-size:13px;color:#222;">5.00</span>
<span class="t" style="left:1218.19px;top:22.60px;font-size:13px;color:#222;">5.00</span></div>
<div class="row" style="top:330px">
<div class="cb" style="left:67px;top:26px"></div>
<svg class="abs" style="left:102.6px;top:13.2px;" width="25" height="25" viewBox="0 0 24 24" fill="none" stroke="#727cf5" stroke-width="2.7" stroke-linecap="round" stroke-linejoin="round"><polyline points="16 16 12 12 8 16"/><line x1="12" y1="12" x2="12" y2="21"/><path d="M20.39 18.39A5 5 0 0 0 18 9h-1.26A8 8 0 1 0 3 16.3"/></svg>
<div class="sel"></div>
<span class="t" style="left:241.00px;top:16.15px;font-size:14px;color:#111;letter-spacing:0.183px;">--Select--</span>
<svg class="abs" style="left:303.5px;top:18.8px;" width="17.5" height="17.5" viewBox="0 0 24 24" fill="none" stroke="#222" stroke-width="1.8" stroke-linecap="round" stroke-linejoin="round"><polyline points="6 9 12 15 18 9"/></svg>
<svg class="abs" style="left:333.3px;top:13.6px;" width="19.5" height="19.5" viewBox="0 0 24 24" fill="none" stroke="#727cf5" stroke-width="2.6" stroke-linecap="round" stroke-linejoin="round"><path d="M12 20h9"/><path d="M16.5 3.5a2.121 2.121 0 0 1 3 3L7 19l-4 1 1-4L16.5 3.5z"/></svg>
<svg class="abs" style="left:498px;top:16px" width="40" height="22" viewBox="0 0 40 22"><rect width="40" height="22" fill="#f5f5f5"/><ellipse cx="20" cy="16.600" rx="15" ry="1" fill="#ddd" opacity=".7"/>
<path d="M5.100 13.100C6 11.500 8 10.500 11 10L15.500 8.800C18 7.300 21 6.900 23.500 7.200 26.500 7.600 29 9 31 9.800 33.500 10.200 35 10.800 35 12L34.400 14.600 30 15.400 8 16 5.300 15.600Z" fill="#efbb0f"/>
<path d="M14.800 9.500L18.500 7.900C19.800 7.500 21.200 7.500 22.200 7.800L21.800 9.400Z" fill="#23241c"/><path d="M22.600 10.200L24.300 8.200 28.800 9.500 26 10.700Z" fill="#1d1e18"/>
<path d="M5.300 14.400L14.400 14.300 14.400 15.700 5.500 15.700Z" fill="#1d1a10"/><path d="M9.500 10.500L16 11.500 15.500 12.500 10 12.200Z" fill="#8a6c0a" opacity=".8"/>
<path d="M22 11.500L31 11 31.500 14 22.500 15Z" fill="#d9a30a" opacity=".7"/>
<circle cx="19.800" cy="14.600" r="2.300" fill="#2a251b"/><circle cx="19.800" cy="14.600" r="1.200" fill="#8d7f55"/><ellipse cx="33" cy="13.400" rx="1.700" ry="2.300" fill="#2a251b"/><ellipse cx="33" cy="13.400" rx=".8" ry="1.200" fill="#7d7150"/></svg>
<svg class="abs" style="left:537.8px;top:13.6px;" width="19.5" height="19.5" viewBox="0 0 24 24" fill="none" stroke="#727cf5" stroke-width="2.6" stroke-linecap="round" stroke-linejoin="round"><path d="M12 20h9"/><path d="M16.5 3.5a2.121 2.121 0 0 1 3 3L7 19l-4 1 1-4L16.5 3.5z"/></svg>
<span class="t" style="left:608.60px;top:15.74px;font-size:12px;color:#2b3035;letter-spacing:0.422px;">M0002</span>
<span class="t" style="left:728.40px;top:15.74px;font-size:12px;color:#2b3035;letter-spacing:0.066px;">MTest child product...</span>
<svg class="abs" style="left:881.8px;top:16.5px;" width="20" height="20" viewBox="0 0 24 24" fill="none" stroke="#727cf5" stroke-width="2.6" stroke-linecap="round" stroke-linejoin="round"><line x1="3" y1="12" x2="21" y2="12"/><line x1="3" y1="6" x2="21" y2="6"/><line x1="3" y1="18" x2="21" y2="18"/></svg>
<svg class="abs" style="left:961.6px;top:16.6px;" width="19.5" height="19.5" viewBox="0 0 24 24" fill="none" stroke="#727cf5" stroke-width="2.6" stroke-linecap="round" stroke-linejoin="round"><path d="M12 20h9"/><path d="M16.5 3.5a2.121 2.121 0 0 1 3 3L7 19l-4 1 1-4L16.5 3.5z"/></svg>
<span class="t" style="left:1108.19px;top:22.60px;font-size:13px;color:#222;">2.50</span>
<span class="t" style="left:1218.19px;top:22.60px;font-size:13px;color:#222;">2.50</span></div>
<div class="row odd" style="top:385px">
<svg class="abs" style="left:498px;top:7px" width="40" height="40" viewBox="0 0 40 40"><rect width="40" height="100" fill="#fdfdfd"/><rect width="40" height="100" fill="url(#chk)"/></svg></div></div>
<div class="abs" style="left:1232px;top:49px;width:17px;height:397px;background:#f1f1f1"></div>
<div class="abs" style="left:1234px;top:66px;width:13px;height:87px;background:#c1c1c1"></div>
<svg class="abs" style="left:1232px;top:49px" width="17" height="17" viewBox="0 0 17 17"><path d="M5 10.5L8.5 6.5 12 10.5Z" fill="#a3a3a3"/></svg>
<svg class="abs" style="left:1232px;top:429px" width="17" height="17" viewBox="0 0 17 17"><path d="M5 6.5L8.5 10.5 12 6.5Z" fill="#505050"/></svg>
<div class="abs" style="left:0;top:446px;width:1232px;height:17px;background:#f1f1f1"></div>
<div class="abs" style="left:1232px;top:446px;width:17px;height:17px;background:#fff"></div>
<div class="abs" style="left:85px;top:446px;width:1px;height:17px;background:#babfc7"></div>
<div class="abs" style="left:103px;top:448px;width:870px;height:13px;background:#c1c1c1"></div>
<svg class="abs" style="left:-0.5px;top:446px" width="17" height="17" viewBox="0 0 17 17"><path d="M10.5 5L6.5 8.5 10.5 12Z" fill="#a3a3a3"/></svg>
<svg class="abs" style="left:68.5px;top:446px" width="17" height="17" viewBox="0 0 17 17"><path d="M6.5 5L10.5 8.5 6.5 12Z" fill="#a3a3a3"/></svg>
<svg class="abs" style="left:85.5px;top:446px" width="17" height="17" viewBox="0 0 17 17"><path d="M10.5 5L6.5 8.5 10.5 12Z" fill="#a3a3a3"/></svg>
<svg class="abs" style="left:1215.5px;top:446px" width="17" height="17" viewBox="0 0 17 17"><path d="M6.5 5L10.5 8.5 6.5 12Z" fill="#505050"/></svg>
<div class="abs" style="left:0;top:463px;width:1249px;height:1px;background:#babfc7"></div>
<span class="t" style="left:896.80px;top:474.50px;font-size:13px;font-weight:700;color:#181d1f;letter-spacing:-0.011px;">1 to 30 of 48</span>
<span class="t" style="left:1088.80px;top:474.50px;font-size:13px;color:#181d1f;letter-spacing:-0.476px;">Page 1 of 2</span>
<svg class="abs" style="left:1017.4000000000001px;top:480.6px" width="10" height="10" viewBox="0 0 10 10" fill="none" stroke="#a0a5ac" stroke-width="1.3" stroke-linecap="round" stroke-linejoin="round"><path d="M1.2 1.6V8.800M8.600 1.600L5 5.200 8.600 8.800"/></svg>
<svg class="abs" style="left:1046px;top:480.6px" width="10" height="10" viewBox="0 0 10 10" fill="none" stroke="#a0a5ac" stroke-width="1.3" stroke-linecap="round" stroke-linejoin="round"><path d="M6.800 1.600L3.200 5.200 6.800 8.800"/></svg>
<svg class="abs" style="left:1184.6px;top:480.6px" width="10" height="10" viewBox="0 0 10 10" fill="none" stroke="#181d1f" stroke-width="1.3" stroke-linecap="round" stroke-linejoin="round"><path d="M2 1.600L5.600 5.200 2 8.800"/></svg>
<svg class="abs" style="left:1212.5px;top:480.6px" width="10" height="10" viewBox="0 0 10 10" fill="none" stroke="#181d1f" stroke-width="1.3" stroke-linecap="round" stroke-linejoin="round"><path d="M1 1.600L4.600 5.200 1 8.800M8.200 1.600V8.800"/></svg></div>
<div id="footer"></div></body></html>
